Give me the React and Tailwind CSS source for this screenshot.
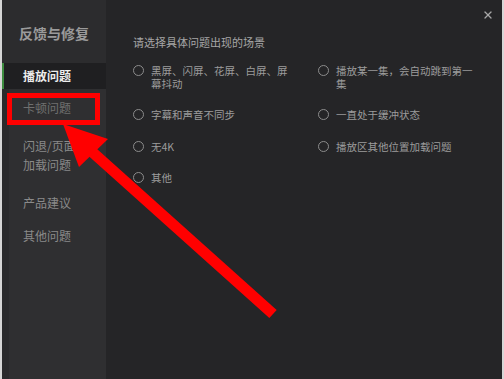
import { X } from 'lucide-react';

const Option = ({ label }) => (
  <div className="flex items-start gap-[7px]">
    <span className="mt-[1px] w-[11px] h-[11px] shrink-0 rounded-full border-[1.5px] border-[#8c8c8c]" />
    <span className="max-w-[140px] text-[10.5px] leading-[13px] text-[#9c9c9c]">{label}</span>
  </div>
);

const App = () => {
  return (
    <div className="relative w-[504px] h-[379px] overflow-hidden font-['Noto_Sans_CJK_SC','Microsoft_YaHei',sans-serif]">
      <div className="flex w-full h-full bg-[#252527] border-l-2 border-r-2 border-[#d6d6d6]">
        {/* ===== Sidebar ===== */}
        <aside className="w-[104px] flex flex-col bg-[linear-gradient(to_right,#2a2a2c_7px,#2f2f31_7px)]">
          <div className="h-[63px] pt-[4px] pl-[17px] flex items-center bg-[#2c2c2e] text-[14px] font-bold text-[#9a9a9a]">
            反馈与修复
          </div>
          <div className="h-[26px] flex items-center pl-[19px] border-l-2 border-[#3d8c3f] bg-[#1f1f21] text-[12px] font-bold text-[#ececec]">
            播放问题
          </div>
          <div className="h-[38px] flex items-center pl-[21px] text-[12px] text-[#6f6f6f]">
            卡顿问题
          </div>
          <div className="pt-[9px] pl-[21px] text-[12px] leading-[19px] text-[#8a8a8a]">
            闪退/页面<br />加载问题
          </div>
          <div className="mt-[19px] pl-[21px] text-[12px] leading-[19px] text-[#8a8a8a]">
            产品建议
          </div>
          <div className="mt-[14px] pl-[21px] text-[12px] leading-[19px] text-[#8a8a8a]">
            其他问题
          </div>
        </aside>

        {/* ===== Main ===== */}
        <main className="relative flex-1 pt-[35px] pl-[27px]">
          <button className="absolute top-[9px] right-[8px] text-[#a8a8a8]" aria-label="关闭">
            <X size={12} strokeWidth={2.5} />
          </button>
          <p className="text-[11px] leading-[15px] text-[#a6a6a6]">请选择具体问题出现的场景</p>
          <div className="mt-[13.5px] grid grid-cols-[185px_1fr] gap-y-[18.5px]">
            <Option label="黑屏、闪屏、花屏、白屏、屏幕抖动" />
            <Option label="播放某一集，会自动跳到第一集" />
            <Option label="字幕和声音不同步" />
            <Option label="一直处于缓冲状态" />
            <Option label="无4K" />
            <Option label="播放区其他位置加载问题" />
            <Option label="其他" />
          </div>
        </main>
      </div>

      {/* Red annotation */}
      <svg className="absolute top-0 left-0 pointer-events-none" width="504" height="379" viewBox="0 0 504 379">
        <rect x="9.5" y="95.5" width="88" height="27" fill="none" stroke="#ff0000" strokeWidth="5" />
        <line x1="90" y1="150" x2="273" y2="314" stroke="#ff0000" strokeWidth="11" />
        <polygon points="63,124 108,139 79,167" fill="#ff0000" />
      </svg>
    </div>
  );
};

export default App;
